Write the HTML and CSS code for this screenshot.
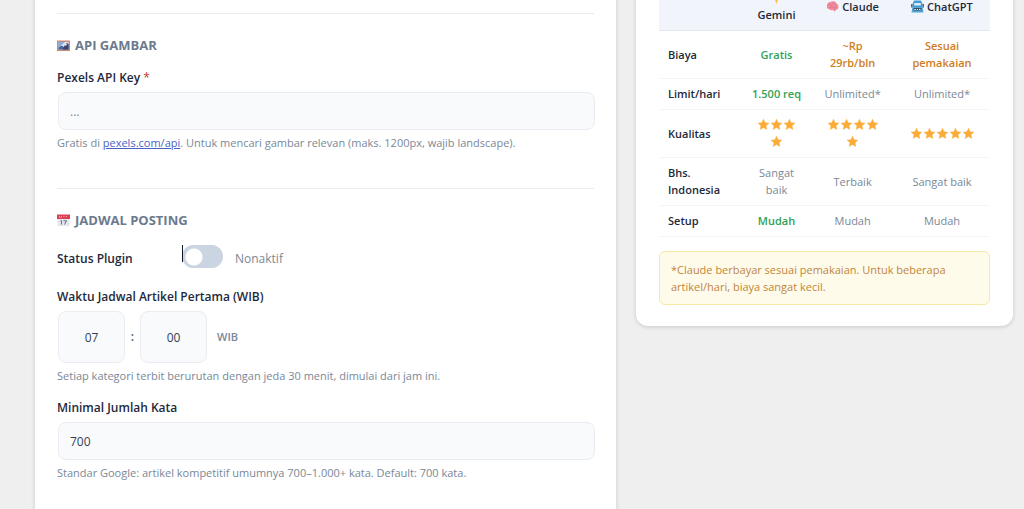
FILE: index.html
```html
<!DOCTYPE html>
<html lang="id">
<head>
<meta charset="utf-8">
<meta name="viewport" content="width=device-width, initial-scale=1">
<title>Pengaturan Plugin</title>
<link rel="stylesheet" href="styles.css">
</head>
<body>
<svg class="sprite" aria-hidden="true">
  <symbol id="star" viewBox="-1 -1 26 26"><path d="M12 1.500l3.100 7 7.600.8-5.700 5.100 1.600 7.500L12 18.100l-6.600 3.800L7 14.400 1.300 9.300l7.600-.8z" fill="#fbac38" stroke="#fbac38" stroke-width="1" stroke-linejoin="round"/></symbol>
</svg>
<main class="page">
  <form class="card settings">
    <section class="section">
      <h2 class="section-title">
        <svg class="icon" viewBox="0 0 26 26" aria-hidden="true"><rect x="0" y="3" width="26" height="21" rx="1" fill="#c98a74"/><rect x="3" y="6" width="20" height="15" fill="#d9e6f7"/><path d="M3 6h13L3 17z" fill="#7fa9e3"/><path d="M3 21v-4l6-4 5 3 9-4v9z" fill="#43679f"/><path d="M13 18l3-7 3-3 4 2v11H11z" fill="#3b4468"/><circle cx="17" cy="11" r="2.500" fill="#e6e1e5"/></svg>
        API GAMBAR
      </h2>
      <div class="field">
        <label class="label" for="pexels">Pexels API Key <span class="required">*</span></label>
        <input class="input" id="pexels" type="text" placeholder="...">
        <p class="hint">Gratis di <a class="link" href="#">pexels.com/api</a>. Untuk mencari gambar relevan (maks. 1200px, wajib landscape).</p>
      </div>
    </section>
    <section class="section">
      <h2 class="section-title">
        <svg class="icon" viewBox="0 0 26 26" aria-hidden="true"><path d="M1 8h24v16H1z" fill="#e3e6ec"/><path d="M0 1h26v9H0z" fill="#df3e50"/><path d="M4 4h2v2h2V4h2v3H4zM13 4h2v2h-2zM18 4h2v2h-2z" fill="#f6a8ad"/><path d="M7 14l2-1v8M13 13.500h6l-4 7.500" fill="none" stroke="#68717f" stroke-width="2"/></svg>
        JADWAL POSTING
      </h2>
      <div class="status-row">
        <label class="label" for="status">Status Plugin</label>
        <span class="switch-box"><input class="switch" id="status" type="checkbox" role="switch"><span class="caret"></span></span>
        <span class="status-text">Nonaktif</span>
      </div>
      <div class="field" role="group" aria-labelledby="time-label">
        <label class="label" id="time-label" for="hour">Waktu Jadwal Artikel Pertama (WIB)</label>
        <div class="time-row">
          <input class="input time" id="hour" type="text" inputmode="numeric" value="07">
          <span class="colon">:</span>
          <input class="input time" type="text" inputmode="numeric" value="00" aria-label="Menit">
          <span class="zone">WIB</span>
        </div>
        <p class="hint">Setiap kategori terbit berurutan dengan jeda 30 menit, dimulai dari jam ini.</p>
      </div>
      <div class="field">
        <label class="label" for="words">Minimal Jumlah Kata</label>
        <input class="input" id="words" type="text" inputmode="numeric" value="700">
        <p class="hint">Standar Google: artikel kompetitif umumnya 700–1.000+ kata. Default: 700 kata.</p>
      </div>
    </section>
  </form>
  <aside class="card compare">
    <table class="table">
      <colgroup><col class="col-name"><col class="col-gemini"><col class="col-claude"><col class="col-gpt"></colgroup>
      <thead>
        <tr>
          <th></th>
          <th scope="col"><svg class="icon" viewBox="0 0 26 26" aria-hidden="true"><path d="M13 0l3 9 9 4-9 4-3 9-3-9-9-4 9-4z" fill="#fbbd45"/></svg> Gemini</th>
          <th scope="col"><svg class="icon" viewBox="0 0 26 26" aria-hidden="true"><path d="M2 13C1 8 5 4 9 4c5-3 11-1 12 3 4 2 5 7 3 10-1 3-4 3-5 3l-1 4-4-4c-4 1-7 0-8-2-3 0-5-2-4-5z" fill="#f08b9c"/><path d="M6 9c3-1 5 1 5 3M13 5c0 3 2 4 5 4M7 15c4-2 7 0 10 0M16 18c2-2 4-3 5-6" fill="none" stroke="#d9728a" stroke-width="1.500" stroke-linecap="round"/></svg> Claude</th>
          <th scope="col"><svg class="icon" viewBox="0 0 26 26" aria-hidden="true"><path d="M6 1h14l3 7v7H3V8z" fill="#459bd4"/><path d="M0 8h3v7H0zM23 8h3v7h-3z" fill="#566879"/><rect x="6" y="6" width="14" height="5" rx="2" fill="#d8edf9"/><path d="M3 14h20l2 11H1z" fill="#56a5d8"/><path d="M5 16h16v5H5z" fill="#34566d"/><path d="M7 18h3v2H7zM12 18h2v2h-2zM16 18h3v2h-3z" fill="#e4f0f8"/></svg> ChatGPT</th>
        </tr>
      </thead>
      <tbody>
        <tr><th scope="row">Biaya</th><td class="good">Gratis</td><td class="paid">~Rp 29rb/bln</td><td class="paid">Sesuai pemakaian</td></tr>
        <tr><th scope="row">Limit/hari</th><td class="good">1.500 req</td><td>Unlimited*</td><td>Unlimited*</td></tr>
        <tr>
          <th scope="row">Kualitas</th>
          <td><span class="stars" role="img" aria-label="4 bintang"><svg class="star"><use href="#star"/></svg><svg class="star"><use href="#star"/></svg><svg class="star"><use href="#star"/></svg><svg class="star"><use href="#star"/></svg></span></td>
          <td><span class="stars" role="img" aria-label="5 bintang"><svg class="star"><use href="#star"/></svg><svg class="star"><use href="#star"/></svg><svg class="star"><use href="#star"/></svg><svg class="star"><use href="#star"/></svg><svg class="star"><use href="#star"/></svg></span></td>
          <td><span class="stars" role="img" aria-label="5 bintang"><svg class="star"><use href="#star"/></svg><svg class="star"><use href="#star"/></svg><svg class="star"><use href="#star"/></svg><svg class="star"><use href="#star"/></svg><svg class="star"><use href="#star"/></svg></span></td>
        </tr>
        <tr><th scope="row">Bhs. Indonesia</th><td>Sangat baik</td><td>Terbaik</td><td>Sangat baik</td></tr>
        <tr><th scope="row">Setup</th><td class="good">Mudah</td><td>Mudah</td><td>Mudah</td></tr>
      </tbody>
    </table>
    <p class="note">*Claude berbayar sesuai pemakaian. Untuk beberapa artikel/hari, biaya sangat kecil.</p>
  </aside>
</main>
</body>
</html>
```
FILE: styles.css
```css
* { box-sizing: border-box; }

body {
  margin: 0;
  background: #efefef;
  color: #1e293b;
  font: 12px/18px "Open Sans", "Noto Sans", sans-serif;
  overflow: hidden;
}

.sprite { position: absolute; width: 0; height: 0; }

.page {
  display: grid;
  grid-template-columns: minmax(0, 1fr) 377px;
  gap: 20px;
  align-items: start;
  padding: 0 11px 0 35px;
}

.card {
  background: #fff;
  border-radius: 12px;
  box-shadow: 0 1px 4px rgba(0, 0, 0, 0.16);
}

/* Both cards are scrolled past their top edge */
.settings { margin-top: -24px; padding: 37px 22px 24px; }
.compare { margin-top: -41px; padding: 24px 23px 21px; }

.section { border-top: 1px solid #e8ecef; padding: 22px 0 36px; }

.section-title {
  display: flex;
  align-items: center;
  gap: 5px;
  margin: 0 0 15px;
  font-size: 13px;
  line-height: 18px;
  font-weight: 700;
  color: #6b7a8d;
}

.icon { width: 13px; height: 13px; vertical-align: -2px; }

.field + .field { margin-top: 14px; }

.label { display: block; font-weight: 600; }

.required { color: #c0392b; font-weight: 400; }

.input {
  display: block;
  width: 100%;
  height: 38px;
  margin: 5px 1px 4px;
  padding: 0 11px;
  border: 1px solid #e9edf2;
  border-radius: 8px;
  background: #f8fafc;
  color: #334155;
  font: inherit;
}

.input::placeholder { color: #7b8794; opacity: 1; }

.hint { margin: 0; font-size: 11px; color: #7a8897; }

.link { color: #4a5fc4; }

.status-row {
  display: flex;
  align-items: center;
  height: 32px;
  margin: -4px 0 16px;
  padding-top: 6px;
}

.status-row .label { width: 125px; }

.switch-box { position: relative; height: 23px; margin: 0 12px 6px 0; }

.switch {
  appearance: none;
  display: block;
  width: 41px;
  height: 23px;
  margin: 0;
  border-radius: 12px;
  background: radial-gradient(circle at 12px 12px, #fff 8px, #cbd5e1 9px);
}

.caret { position: absolute; left: 0; top: 0; width: 1px; height: 17px; background: #111827; }

.status-text { color: #7a8897; }

.time-row { display: flex; align-items: center; margin: 5px 0 4px; }

.time { width: 67px; height: 52px; margin: 0 1px; text-align: center; }

.colon { width: 13px; text-align: center; font-weight: 600; color: #475569; }

.zone { margin-left: 9px; font-size: 11px; font-weight: 600; color: #7a8897; }

.table {
  width: 100%;
  table-layout: fixed;
  border-collapse: separate;
  border-spacing: 0;
  font-size: 11px;
  line-height: 17px;
}

.col-name { width: 25%; }
.col-gemini { width: 21%; }
.col-claude { width: 25%; }
.col-gpt { width: 29%; }

.table th, .table td {
  padding: 6px 9px 7px;
  border-bottom: 1px solid #f3f5f8;
  text-align: center;
  vertical-align: middle;
}

.table td { color: #7a8897; }
.table tbody th { text-align: left; font-weight: 600; }
.table thead th { background: #f1f4fa; border-bottom-color: #e2e8f0; font-weight: 600; }
.table .good { color: #2fa257; font-weight: 600; }
.table .paid { color: #cf7d1c; font-weight: 600; }

.stars { display: flex; flex-wrap: wrap; justify-content: center; }
.star { width: 13px; height: 17px; }

.note {
  margin: 14px 0 0;
  padding: 9px 11px;
  border: 1px solid #f5e9a8;
  border-radius: 6px;
  background: #fffbeb;
  color: #c2853a;
  font-size: 11px;
  line-height: 17px;
}
```
